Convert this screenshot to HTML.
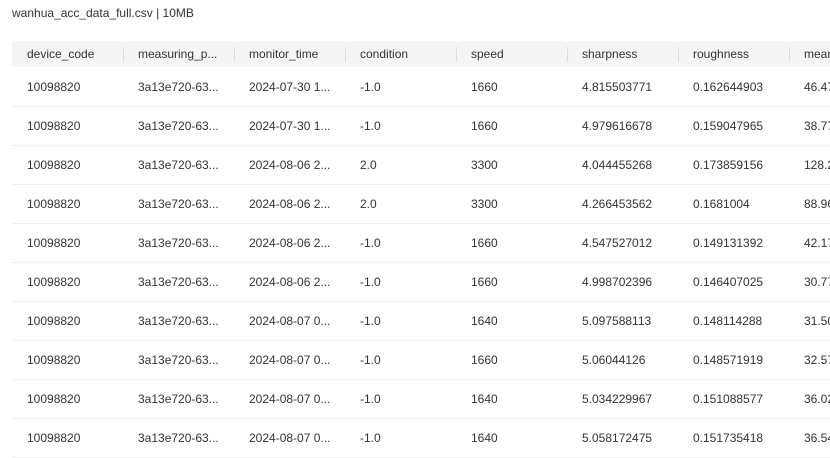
<!DOCTYPE html>
<html><head><style>
body{margin:0;width:830px;height:456px;overflow:hidden;background:#fff;font-family:"Liberation Sans",Arial,sans-serif;font-size:12px;color:#333}
.t{position:absolute;left:12px;top:6px;font-size:12px;color:#333}
table{position:absolute;left:12px;top:41px;border-collapse:collapse;table-layout:fixed;width:888px}
td,th{width:111px;padding:0 0 0 15px;box-sizing:border-box;text-align:left;white-space:nowrap;overflow:hidden}
th{height:26px;background:#f5f5f5;font-weight:normal;color:#333;position:relative}
th+th:before{content:"";position:absolute;left:0;top:6px;height:15px;width:1px;background:#ddd}
td{height:39px;border-bottom:1px solid #efefef;color:#333;padding-top:1px}
</style></head><body>
<div class="t">wanhua_acc_data_full.csv | 10MB</div>
<table>
<tr><th>device_code</th><th>measuring_p...</th><th>monitor_time</th><th>condition</th><th>speed</th><th>sharpness</th><th>roughness</th><th>mean</th></tr>
<tr><td>10098820</td><td>3a13e720-63...</td><td>2024-07-30 1...</td><td>-1.0</td><td>1660</td><td>4.815503771</td><td>0.162644903</td><td>46.47</td></tr>
<tr><td>10098820</td><td>3a13e720-63...</td><td>2024-07-30 1...</td><td>-1.0</td><td>1660</td><td>4.979616678</td><td>0.159047965</td><td>38.77</td></tr>
<tr><td>10098820</td><td>3a13e720-63...</td><td>2024-08-06 2...</td><td>2.0</td><td>3300</td><td>4.044455268</td><td>0.173859156</td><td>128.2</td></tr>
<tr><td>10098820</td><td>3a13e720-63...</td><td>2024-08-06 2...</td><td>2.0</td><td>3300</td><td>4.266453562</td><td>0.1681004</td><td>88.96</td></tr>
<tr><td>10098820</td><td>3a13e720-63...</td><td>2024-08-06 2...</td><td>-1.0</td><td>1660</td><td>4.547527012</td><td>0.149131392</td><td>42.17</td></tr>
<tr><td>10098820</td><td>3a13e720-63...</td><td>2024-08-06 2...</td><td>-1.0</td><td>1660</td><td>4.998702396</td><td>0.146407025</td><td>30.77</td></tr>
<tr><td>10098820</td><td>3a13e720-63...</td><td>2024-08-07 0...</td><td>-1.0</td><td>1640</td><td>5.097588113</td><td>0.148114288</td><td>31.50</td></tr>
<tr><td>10098820</td><td>3a13e720-63...</td><td>2024-08-07 0...</td><td>-1.0</td><td>1660</td><td>5.06044126</td><td>0.148571919</td><td>32.57</td></tr>
<tr><td>10098820</td><td>3a13e720-63...</td><td>2024-08-07 0...</td><td>-1.0</td><td>1640</td><td>5.034229967</td><td>0.151088577</td><td>36.02</td></tr>
<tr><td>10098820</td><td>3a13e720-63...</td><td>2024-08-07 0...</td><td>-1.0</td><td>1640</td><td>5.058172475</td><td>0.151735418</td><td>36.54</td></tr>
</table>
</body></html>
